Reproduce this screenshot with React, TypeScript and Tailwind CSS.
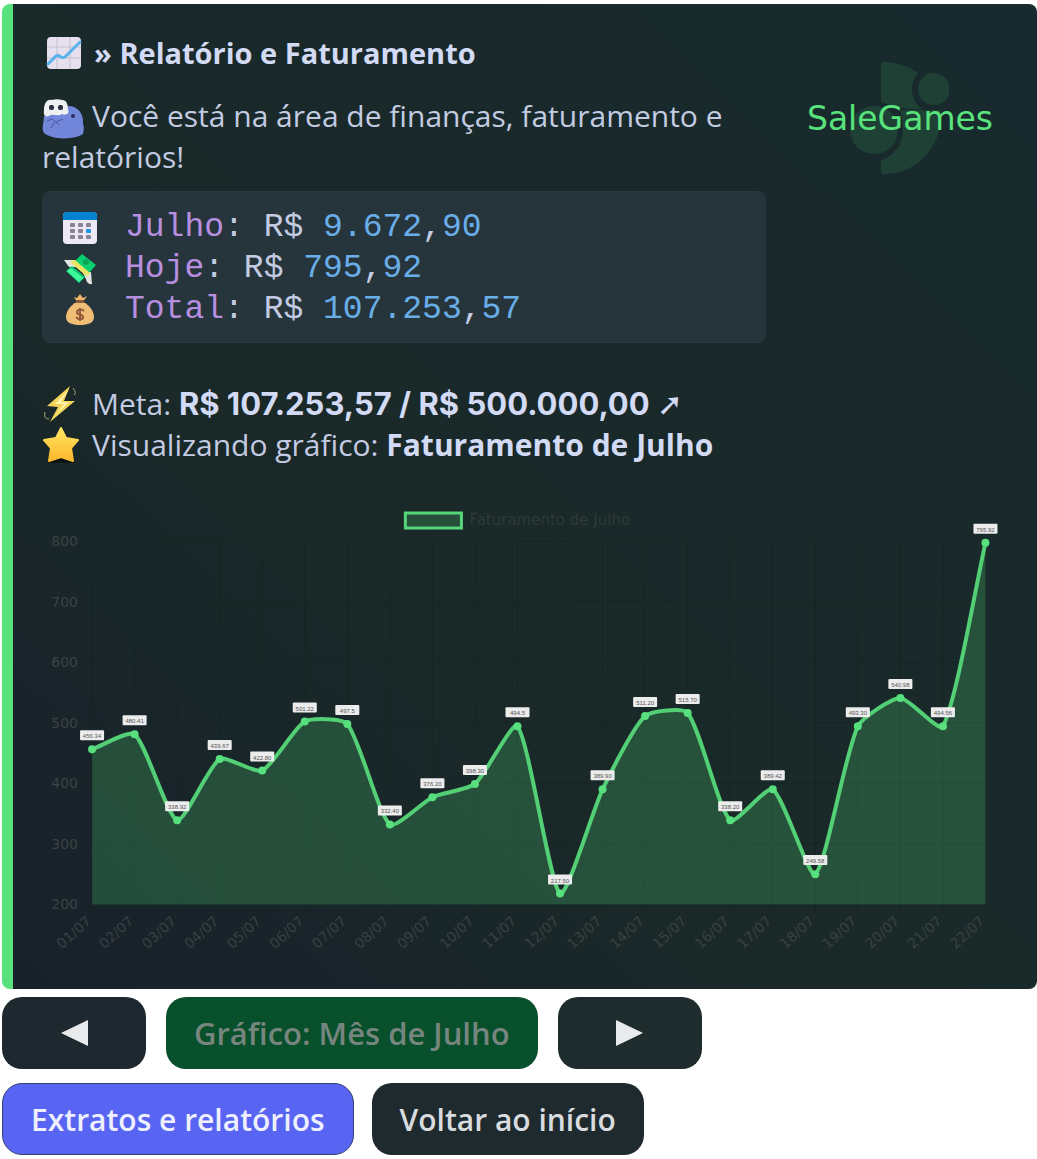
import type { ReactNode } from "react"

type Sale = { day: string; value: number; label: string }

const sales: Sale[] = [
  { day: "01/07", value: 456, label: "456.34" },
  { day: "02/07", value: 481, label: "480.41" },
  { day: "03/07", value: 339, label: "338.92" },
  { day: "04/07", value: 440, label: "439.67" },
  { day: "05/07", value: 421, label: "422.80" },
  { day: "06/07", value: 502, label: "501.22" },
  { day: "07/07", value: 498, label: "497.5" },
  { day: "08/07", value: 332, label: "332.40" },
  { day: "09/07", value: 377, label: "376.20" },
  { day: "10/07", value: 399, label: "398.30" },
  { day: "11/07", value: 494, label: "494.5" },
  { day: "12/07", value: 218, label: "217.50" },
  { day: "13/07", value: 390, label: "389.90" },
  { day: "14/07", value: 511, label: "511.20" },
  { day: "15/07", value: 516, label: "515.70" },
  { day: "16/07", value: 339, label: "338.20" },
  { day: "17/07", value: 390, label: "389.42" },
  { day: "18/07", value: 250, label: "249.58" },
  { day: "19/07", value: 494, label: "493.30" },
  { day: "20/07", value: 541, label: "540.98" },
  { day: "21/07", value: 494, label: "494.56" },
  { day: "22/07", value: 797, label: "795.92" },
]

const ticks = [800, 700, 600, 500, 400, 300, 200]

const LEFT = 50
const STEP = 42.5
const TOP = 42
const BOTTOM = 405
const TENSION = 0.2

const xOf = (index: number) => LEFT + index * STEP
const yOf = (value: number) => BOTTOM - ((value - 200) / 600) * (BOTTOM - TOP)

const points = sales.map((sale, index) => ({ x: xOf(index), y: yOf(sale.value) }))

function clampY(y: number) {
  return Math.min(BOTTOM, Math.max(TOP, y))
}

function buildCurve() {
  const handles = points.map((point, i) => {
    const prev = points[i - 1] ?? point
    const next = points[i + 1] ?? point
    const before = Math.hypot(point.x - prev.x, point.y - prev.y)
    const after = Math.hypot(next.x - point.x, next.y - point.y)
    const a = (TENSION * before) / (before + after)
    const b = (TENSION * after) / (before + after)
    const dx = next.x - prev.x
    const dy = next.y - prev.y
    return {
      inX: point.x - a * dx,
      inY: clampY(point.y - a * dy),
      outX: point.x + b * dx,
      outY: clampY(point.y + b * dy),
    }
  })

  return points
    .map((point, i) => {
      if (i === 0) return `M${point.x} ${point.y}`
      const from = handles[i - 1]
      const to = handles[i]
      return `C${from.outX} ${from.outY} ${to.inX} ${to.inY} ${point.x} ${point.y}`
    })
    .join(" ")
}

function SalesChart() {
  const curve = buildCurve()
  const right = xOf(sales.length - 1)

  return (
    <svg
      viewBox="0 0 966 460"
      className="block w-full font-['Liberation_Sans',sans-serif]"
      role="img"
      aria-label="Faturamento de Julho"
    >
      <rect x="363" y="14" width="56" height="15" fill="#26503c" stroke="#56d679" strokeWidth="3" />
      <text x="427" y="26" fontSize="15" fill="#2f3838" fontFamily="DejaVu Sans">
        Faturamento de Julho
      </text>

      {ticks.map((tick) => (
        <g key={tick}>
          <line x1={LEFT - 8} x2={right} y1={yOf(tick)} y2={yOf(tick)} stroke="#162524" />
          <text x="36" y={yOf(tick) + 5} fontSize="14" textAnchor="end" fill="#3d4243" fontFamily="DejaVu Sans">
            {tick}
          </text>
        </g>
      ))}

      {sales.map((sale, i) => (
        <g key={sale.day}>
          <line x1={xOf(i)} x2={xOf(i)} y1={TOP} y2={BOTTOM + 8} stroke="#162524" />
          <text
            transform={`translate(${xOf(i)} ${BOTTOM + 18}) rotate(-42)`}
            fontSize="14"
            textAnchor="end"
            fill="#3a4041"
            fontFamily="DejaVu Sans"
          >
            {sale.day}
          </text>
        </g>
      ))}

      <path d={`${curve} L${right} ${BOTTOM} L${LEFT} ${BOTTOM} Z`} fill="#56e27c" fillOpacity="0.22" />
      <path d={curve} fill="none" stroke="#53cf76" strokeWidth="4" strokeLinejoin="round" />

      {points.map((point, i) => (
        <g key={sales[i].day}>
          <circle cx={point.x} cy={point.y} r="4" fill="#57e07d" />
          <rect x={point.x - 12} y={point.y - 19} width="24" height="10" rx="1" fill="#ececec" />
          <text x={point.x} y={point.y - 11} fontSize="6" textAnchor="middle" fill="#555555">
            {sales[i].label}
          </text>
        </g>
      ))}
    </svg>
  )
}

function Logo() {
  return (
    <div className="relative mt-[18px] flex h-28 w-[190px] shrink-0 items-center justify-center">
      <svg viewBox="0 0 100 112" className="absolute top-0 left-11 h-28 w-[100px]" aria-hidden="true">
        <g fill="#1f4035">
          <path d="M32 2Q32 0 35 0C48 0 59 4 69 11C60 22 61 37 73 47C54 48 43 44 32 40 Z" />
          <circle cx="85" cy="27" r="16" />
          <circle cx="25" cy="68" r="24" />
          <path d="M51 48 H92 C95 82 68 113 35 112 Q32 112 32 110 V98 C50 93 59 74 51 48 Z" />
        </g>
      </svg>
      <span className="relative font-['DejaVu_Sans',sans-serif] text-[33px] leading-none text-[#58e37d]">SaleGames</span>
    </div>
  )
}

function ChartIcon() {
  return (
    <svg viewBox="0 0 36 34" className="h-[34px] w-9" aria-hidden="true">
      <rect x="1" y="1" width="34" height="32" rx="4" fill="#e6dfee" />
      <path d="M11 1v32M24 1v32M1 11h34M1 22h34" stroke="#c6bfce" fill="none" />
      <path d="M2 28 10 20 C14 17 15 25 20 20 L34 6" fill="none" stroke="#58b2ec" strokeWidth="3" strokeLinecap="round" />
    </svg>
  )
}

function MascotIcon() {
  return (
    <svg viewBox="0 0 42 40" className="h-10 w-[42px]" aria-hidden="true">
      <path d="M2 17 C8 14 20 14 26 7 C35 7 42 14 41 25 C43 29 41 33 41 35 C32 41 10 41 2 34 C-1 29 2 24 2 17Z" fill="#7286da" />
      <path d="M2 11 C2 3 6 0 10 1 C13 0 17 0 20 1 C25 1 26 6 26 11 C28 14 24 17 20 15 C16 18 12 15 9 16 C4 19 1 17 2 11Z" fill="#eef0f2" />
      <rect x="7" y="6" width="5" height="5" rx="2" fill="#25313c" />
      <rect x="16" y="6" width="5" height="5" rx="2" fill="#25313c" />
      <circle cx="31" cy="17" r="2" fill="#2b3168" />
      <path d="M5 22 10 20 14 23 21 20M13 23 9 29M14 23 17 26" stroke="#4656a4" fill="none" />
    </svg>
  )
}

function CalendarIcon() {
  const columns = [9, 17, 25]
  const rows = [13, 19, 25]
  return (
    <svg viewBox="0 0 34 32" className="h-8 w-[34px]" aria-hidden="true">
      <rect width="34" height="32" rx="4" fill="#eee8f4" />
      <path d="M4 0H30Q34 0 34 4V8H0V4Q0 0 4 0Z" fill="#0484d0" />
      {columns.map((x) =>
        rows.map((y) => (
          <rect
            key={`${x}-${y}`}
            x={x - 2}
            y={y - 2}
            width="5"
            height="4"
            rx="1"
            fill={x === 25 && y === 19 ? "#1897e5" : "#8a8297"}
          />
        )),
      )}
    </svg>
  )
}

function MoneyIcon() {
  return (
    <svg viewBox="0 0 34 32" className="h-8 w-[34px]" aria-hidden="true">
      <path d="M1 7 12 7 14 14 6 14Z M20 20 28 19 29 31 Q24 32 23 26Z" fill="#e2e3e3" />
      <path d="M12 8 19 1 33 12 26 20Z M9 13 22 24 16 30 3 18Z" fill="#0bd06f" />
      <circle cx="23" cy="9" r="3" fill="#07a558" />
      <path d="M8 15 20 25 16 29 4 18Z" fill="#40f79b" />
      <path d="M8 8 12 7 27 20 25 23 22 22 8 10Z" fill="#eae665" />
    </svg>
  )
}

function BagIcon() {
  return (
    <svg viewBox="0 0 34 32" className="h-8 w-[34px]" aria-hidden="true">
      <path d="M11 3 14 4 17 0 20 4 24 2 20 8H14Z" fill="#edb66b" />
      <path d="M14 8H20C27 11 31 18 31 23C31 29 25 31 17 31S3 29 3 23C3 18 7 11 14 8Z" fill="#efbd76" />
      <path d="M13 6H21V9H13Z" fill="#8a5a3a" />
      <path d="M17 14V27M21 17C18 14 13 16 14 19C15 21 20 20 20 23C20 26 15 26 13 23" fill="none" stroke="#93593a" strokeWidth="2" />
    </svg>
  )
}

function BoltIcon() {
  return (
    <svg viewBox="0 0 38 38" className="size-[38px]" aria-hidden="true">
      <path d="M28 1 5 21 16 22 8 37 33 16 22 16Z" fill="#f3d459" />
      <path d="M27 4 13 19 22 19 13 31 27 17 19 17Z" fill="#fff3a9" />
      <path d="M3 27Q1 34 7 34M31 3Q35 8 32 10" fill="none" stroke="#a99f78" />
    </svg>
  )
}

function StarIcon() {
  return (
    <svg viewBox="0 0 38 38" className="size-[38px]" aria-hidden="true">
      <defs>
        <linearGradient id="star" x2="0" y2="1">
          <stop stopColor="#ffe562" />
          <stop offset="1" stopColor="#fdb72b" />
        </linearGradient>
      </defs>
      <path d="M6 37 19 32 33 37Z" fill="#0b1211" />
      <path
        d="M19 2 24 12 36 14 29 22 31 35 19 31 7 35 9 22 2 14 14 12Z"
        fill="url(#star)"
        stroke="url(#star)"
        strokeWidth="2"
        strokeLinejoin="round"
      />
    </svg>
  )
}

function CodeRow(props: { icon: ReactNode; name: string; children: ReactNode }) {
  return (
    <div className="flex items-center gap-7">
      {props.icon}
      <span className="whitespace-pre">
        <span className="text-[#b78fe0]">{props.name}</span>: R$ {props.children}
      </span>
    </div>
  )
}

function Num(props: { children: ReactNode }) {
  return <span className="text-[#69aee8]">{props.children}</span>
}

export default function App() {
  return (
    <main className="px-0.5 pt-1 font-['Open_Sans',sans-serif] text-[30px] leading-[41px] text-[#c3cbe2]">
      <article className="-mr-0.5 overflow-hidden rounded-lg border-l-[11px] border-[#57e27c] bg-linear-to-tr from-[#17212b] via-[#1a2928] via-40% to-[#182a2e] pt-7 pr-7 pb-[30px] pl-[29px]">
        <div className="flex justify-between">
          <div className="min-w-0 max-w-[724px] flex-1">
            <h1 className="flex items-center gap-3 pl-1 text-[29px] font-bold text-[#d2daf5]">
              <ChartIcon />
              » Relatório e Faturamento
            </h1>
            <p className="mt-[22px]">
              <span className="-my-2 mr-2 inline-block h-10 align-middle leading-none">
                <MascotIcon />
              </span>
              Você está na área de finanças, faturamento e relatórios!
            </p>
            <div className="mt-[14px] rounded-lg border border-[#263840] bg-[#26353c] px-5 pt-[15px] pb-3 font-['Liberation_Mono',monospace] text-[33px]">
              <CodeRow icon={<CalendarIcon />} name="Julho">
                <Num>9.672</Num>,<Num>90</Num>
              </CodeRow>
              <CodeRow icon={<MoneyIcon />} name="Hoje">
                <Num>795</Num>,<Num>92</Num>
              </CodeRow>
              <CodeRow icon={<BagIcon />} name="Total">
                <Num>107.253</Num>,<Num>57</Num>
              </CodeRow>
            </div>
          </div>
          <div className="pt-3 pr-[14px]">
            <Logo />
          </div>
        </div>

        <div className="mt-10">
          <p className="flex items-center gap-3">
            <BoltIcon />
            <span>
              Meta:{" "}
              <strong className="font-['Inter','DejaVu_Sans',sans-serif] text-[31px] text-[#d2daf5]">
                R$ 107.253,57 / R$ 500.000,00 ➚
              </strong>
            </span>
          </p>
          <p className="flex items-center gap-3">
            <StarIcon />
            <span>
              Visualizando gráfico: <strong className="text-[#d2daf5]">Faturamento de Julho</strong>
            </span>
          </p>
        </div>

        <div className="mt-[34px]">
          <SalesChart />
        </div>
      </article>

      <nav className="mt-2 flex flex-col gap-[14px] font-semibold">
        <div className="flex gap-5">
          <button type="button" aria-label="Anterior" className="flex h-18 w-36 items-center justify-center rounded-[20px] bg-[#1e282f]">
            <svg viewBox="0 0 28 26" className="h-[26px] w-7" aria-hidden="true">
              <path d="M28 0V26L1 13Z" fill="#e9eaec" />
            </svg>
          </button>
          <button type="button" disabled className="h-18 rounded-[20px] bg-[#07502b] px-7 text-[31px] text-[#77857f]">
            Gráfico: Mês de Julho
          </button>
          <button type="button" aria-label="Próximo" className="flex h-18 w-36 items-center justify-center rounded-[20px] bg-[#1f2c2e]">
            <svg viewBox="0 0 28 26" className="h-[26px] w-7" aria-hidden="true">
              <path d="M0 0V26L27 13Z" fill="#e9eaec" />
            </svg>
          </button>
        </div>
        <div className="flex gap-[18px]">
          <button type="button" className="h-18 rounded-[20px] border border-[#34406f] bg-[#5865f2] px-7 text-[#eef0ff]">
            Extratos e relatórios
          </button>
          <button type="button" className="h-18 rounded-[20px] bg-[#1e2a2e] px-7 text-[#d9dcde]">
            Voltar ao início
          </button>
        </div>
      </nav>
    </main>
  )
}
